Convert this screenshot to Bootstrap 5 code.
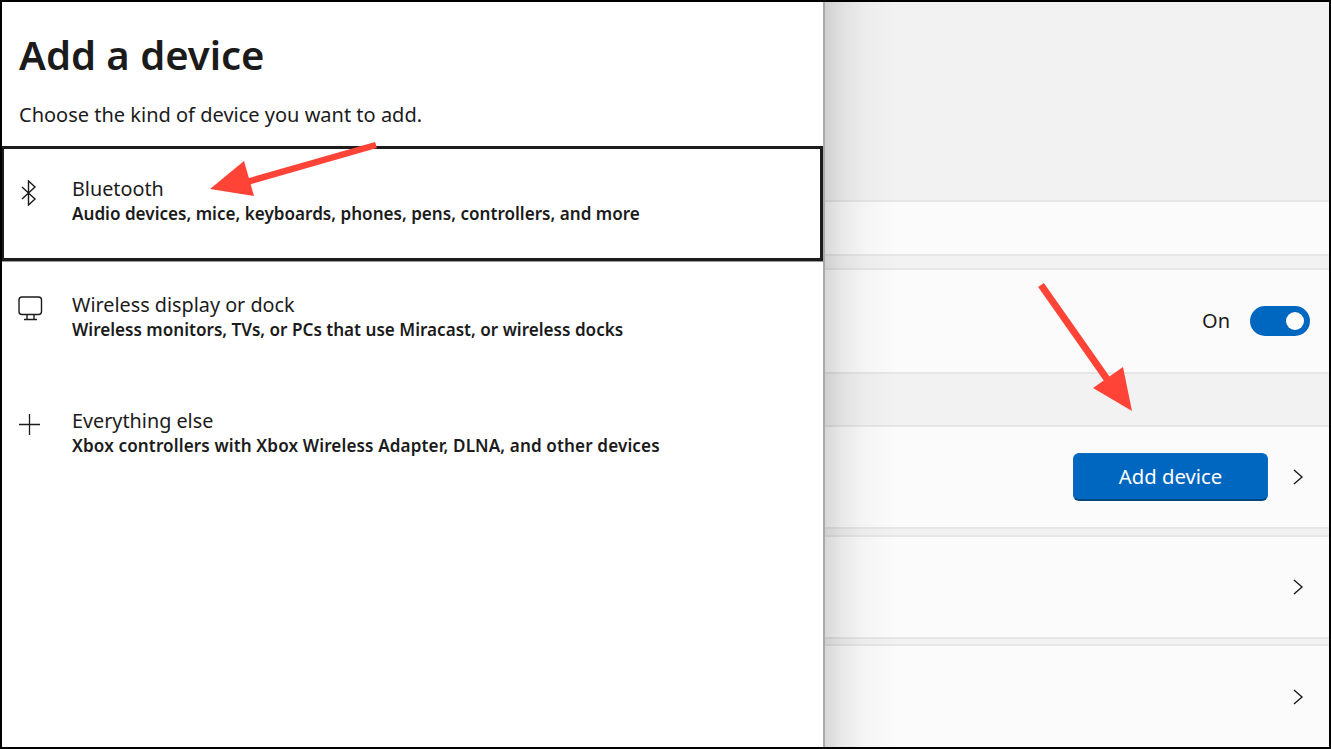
<!DOCTYPE html>
<html lang="en">
<head>
  <meta charset="UTF-8">
  <title>Add a device</title>
  <link href="https://cdn.jsdelivr.net/npm/bootstrap@5.3.0/dist/css/bootstrap.min.css" rel="stylesheet">
  <style>
    html, body {
      height: 100%;
      overflow: hidden;
    }

    body {
      font-family: "Noto Sans", "Open Sans", sans-serif;
      color: #1b1b1b;
      background-color: #fff;
    }

    .shot-frame {
      position: relative;
      width: 1331px;
      height: 749px;
      border: 2px solid #000;
      overflow: hidden;
    }

    /* left panel */
    .add-panel {
      width: 821px;
      background-color: #fff;
    }

    .add-title {
      font-size: 40px;
      font-weight: 600;
      line-height: 50px;
      margin: 28px 0 0 17px;
      color: #1b1b1b;
    }

    .add-intro {
      font-size: 20px;
      line-height: 28px;
      margin: 21px 0 17px 17px;
    }

    .kind-list .list-group-item {
      height: 116px;
      padding: 0;
      border: 0;
      background: transparent;
      color: #1b1b1b;
    }

    .kind-list .list-group-item.kind-active {
      border: 3px solid #1c1c1c;
      border-left-width: 2px;
      box-shadow: 0 1px 0 #999;
      height: 115px;
      margin-bottom: 1px;
    }

    .kind-icon {
      width: 70px;
      flex: none;
    }

    .kind-active .kind-icon {
      width: 68px;
    }

    .kind-text {
      padding-top: 30px;
    }

    .kind-active .kind-text {
      padding-top: 27px;
    }

    .kind-name {
      font-size: 19.8px;
      line-height: 26px;
    }

    .kind-sub {
      font-size: 17.1px;
      line-height: 24px;
      font-weight: 600;
    }

    .kind-sub-wide {
      letter-spacing: .12px;
    }

    .kind-glyph {
      display: block;
      fill: none;
      stroke: #1b1b1b;
    }

    .glyph-bt { margin: 31px 0 0 17px; }
    .glyph-screen { margin: 34px 0 0 16px; }
    .glyph-plus { margin: 36px 0 0 17px; }

    /* settings page behind */
    .back-pane {
      position: relative;
      background-color: #f2f2f2;
      border-left: 2px solid #a9a9a9;
    }

    .back-pane::before {
      content: "";
      position: absolute;
      top: 0;
      bottom: 0;
      left: 0;
      width: 72px;
      background: linear-gradient(to right, rgba(0, 0, 0, .14), rgba(0, 0, 0, .07) 25%, rgba(0, 0, 0, .025) 55%, rgba(0, 0, 0, 0));
    }

    .set-row {
      background-color: #fbfbfb;
      border-top: 2px solid #e6e6e6;
      border-bottom: 2px solid #e6e6e6;
      padding-right: 25px;
    }

    .row-a { height: 56px; margin-top: 198px; }
    .row-b { height: 106px; margin-top: 12px; padding-right: 19px; }
    .row-c { height: 104px; margin-top: 51px; }
    .row-d { height: 104px; margin-top: 6px; }
    .row-e { height: 106px; margin-top: 5px; border-bottom: 0; padding-bottom: 2px; }

    .on-label {
      font-size: 20px;
      margin-right: 20px;
    }

    .win-toggle {
      width: 60px;
      height: 30px;
      border-radius: 15px;
      background-color: #0067c0;
      padding-right: 6px;
    }

    .win-toggle span {
      width: 18px;
      height: 18px;
      border-radius: 50%;
      background-color: #fff;
    }

    .btn.win-btn {
      width: 195px;
      height: 48px;
      padding: 0;
      font-size: 20.3px;
      color: #fff;
      background-color: #0067c0;
      border: 1px solid #0f6cbd;
      border-bottom: 2px solid #00467f;
      border-radius: 6px;
      margin-right: 24px;
    }

    .chev {
      width: 12px;
      height: 18px;
      flex: none;
      fill: none;
      stroke: #1b1b1b;
      stroke-width: 1.4;
    }

    /* red arrows drawn on top of the screenshot */
    .red-arrows {
      position: absolute;
      left: -2px;
      top: -2px;
      pointer-events: none;
    }
  </style>
</head>
<body>

<div class="shot-frame d-flex">

  <!-- Add a device panel -->
  <div class="add-panel flex-shrink-0">
    <h1 class="add-title">Add a device</h1>
    <p class="add-intro">Choose the kind of device you want to add.</p>

    <div class="list-group list-group-flush kind-list rounded-0">
      <div class="list-group-item kind-active d-flex rounded-0">
        <div class="kind-icon">
          <svg class="kind-glyph glyph-bt" width="16" height="26" viewBox="0 0 16 26" stroke-width="1.4"><path d="M1 7l13 12-6.5 6V1L14 7 1 19"/></svg>
        </div>
        <div class="kind-text">
          <div class="kind-name">Bluetooth</div>
          <div class="kind-sub">Audio devices, mice, keyboards, phones, pens, controllers, and more</div>
        </div>
      </div>
      <div class="list-group-item d-flex">
        <div class="kind-icon">
          <svg class="kind-glyph glyph-screen" width="25" height="25" viewBox="0 0 25 25" stroke-width="1.4"><rect x="1" y="1" width="22.5" height="17.5" rx="3"/><path d="M9 18.5v4.5M16 18.5v4.5M6 23.5h13"/></svg>
        </div>
        <div class="kind-text">
          <div class="kind-name">Wireless display or dock</div>
          <div class="kind-sub">Wireless monitors, TVs, or PCs that use Miracast, or wireless docks</div>
        </div>
      </div>
      <div class="list-group-item d-flex">
        <div class="kind-icon">
          <svg class="kind-glyph glyph-plus" width="21" height="21" viewBox="0 0 21 21" stroke-width="1.3"><path d="M10.5 0v21M0 10.5h21"/></svg>
        </div>
        <div class="kind-text">
          <div class="kind-name">Everything else</div>
          <div class="kind-sub kind-sub-wide">Xbox controllers with Xbox Wireless Adapter, DLNA, and other devices</div>
        </div>
      </div>
    </div>
  </div>

  <!-- Settings page behind the panel -->
  <div class="back-pane flex-grow-1">
    <div class="set-row row-a"></div>
    <div class="set-row row-b d-flex align-items-center justify-content-end">
      <span class="on-label">On</span>
      <div class="win-toggle d-flex align-items-center justify-content-end"><span></span></div>
    </div>
    <div class="set-row row-c d-flex align-items-center justify-content-end">
      <button type="button" class="btn win-btn">Add device</button>
      <svg class="chev" viewBox="0 0 12 18"><path d="M2 2l8 7-8 7"/></svg>
    </div>
    <div class="set-row row-d d-flex align-items-center justify-content-end">
      <svg class="chev" viewBox="0 0 12 18"><path d="M2 2l8 7-8 7"/></svg>
    </div>
    <div class="set-row row-e d-flex align-items-center justify-content-end">
      <svg class="chev" viewBox="0 0 12 18"><path d="M2 2l8 7-8 7"/></svg>
    </div>
  </div>

  <svg class="red-arrows" width="1331" height="749" viewBox="0 0 1331 749">
    <path d="M376 145 L247 182" stroke="#ff4337" stroke-width="6.5" fill="none"/>
    <path d="M210 189 L244 161 L254 196 Z" fill="#ff4337"/>
    <path d="M1041 285 L1107 379" stroke="#ff4337" stroke-width="7" fill="none"/>
    <path d="M1132 411 L1093 388 L1123 367 Z" fill="#ff4337"/>
  </svg>
</div>

<script src="https://cdn.jsdelivr.net/npm/bootstrap@5.3.0/dist/js/bootstrap.bundle.min.js"></script>
</body>
</html>
